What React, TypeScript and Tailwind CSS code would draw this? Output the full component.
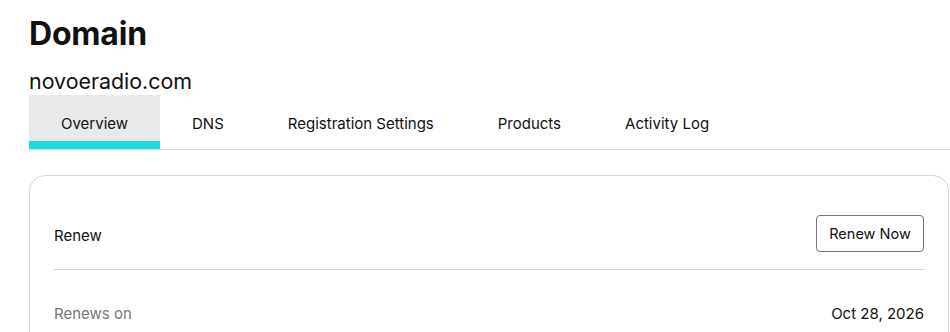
import React from "react";

const tabs = ["Overview", "DNS", "Registration Settings", "Products", "Activity Log"];

export default function App() {
  return (
    <div
      className="w-[950px] h-[332px] overflow-hidden bg-white text-[#111111]"
      style={{ fontFamily: "Inter, 'Noto Sans', Arial, sans-serif" }}
    >
      <div className="pl-[29px] pt-[14px]">
        <h1 className="text-[32px] leading-[40px] font-bold tracking-[-0.2px]">Domain</h1>
        <div className="mt-[13px] text-[21.4px] leading-[28px]">novoeradio.com</div>
        <div className="flex border-b border-[#dcdcdc]">
          {tabs.map((t, i) => (
            <div
              key={t}
              className={
                i === 0
                  ? "h-[54px] px-8 flex flex-col justify-between bg-[#e8e9ea]"
                  : "h-[54px] px-8 flex flex-col justify-between"
              }
            >
              <div className="flex-1 flex items-center pt-[13px] text-[15px]">{t}</div>
              <div className={i === 0 ? "h-[8px] -mx-8 bg-[#1bdbdb]" : "h-[8px]"} />
            </div>
          ))}
        </div>
        <div className="mt-[25px] w-[920px] h-[200px] rounded-[16px] border border-[#d6d6d6] px-6 pt-[39px]">
          <div className="flex items-center justify-between">
            <div className="text-[15px] pt-[6px]">Renew</div>
            <button className="h-[37px] w-[108px] rounded-[4px] border border-[#767676] text-[14.5px] text-[#111111] bg-white">
              Renew Now
            </button>
          </div>
          <div className="mt-[17px] border-t border-[#d6d6d6] mr-[-1px]" />
          <div className="mt-[33px] flex items-center justify-between text-[15px]">
            <div className="text-[#767676]">Renews on</div>
            <div className="text-[#111111]">Oct 28, 2026</div>
          </div>
        </div>
      </div>
    </div>
  );
}
